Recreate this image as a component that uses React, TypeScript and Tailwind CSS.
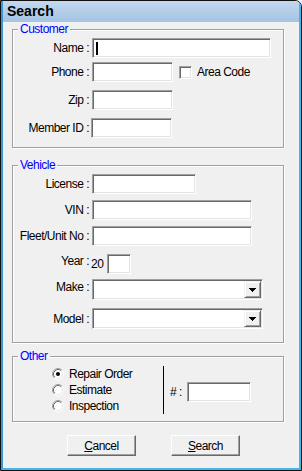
import type { ReactNode } from 'react'

const sunken =
  'bg-white border border-t-[#a0a0a0] border-l-[#a0a0a0] border-r-white border-b-white shadow-[inset_1px_1px_0_#696969,inset_-1px_-1px_0_#e3e3e3]'
const raised =
  'bg-[#f0f0f0] border border-t-white border-l-white border-r-[#696969] border-b-[#696969] shadow-[inset_-1px_-1px_0_#a0a0a0]'

function Field({ className, caret }: { className: string; caret?: boolean }) {
  return (
    <div className={`h-[20px] flex items-center pl-[2px] ${sunken} ${className}`}>
      {caret && <div className="w-[2px] h-[13px] ml-[1px] bg-black" />}
    </div>
  )
}

function Combo() {
  return (
    <div className={`w-[171px] h-[21px] flex justify-end p-[1px] ${sunken}`}>
      <div className="w-[17px] h-full flex items-center justify-center bg-[#f0f0f0] border border-t-[#f0f0f0] border-l-[#f0f0f0] border-r-[#696969] border-b-[#696969] shadow-[inset_1px_1px_0_white,inset_-1px_-1px_0_#a0a0a0]">
        <svg width="7" height="4" viewBox="0 0 7 4" shapeRendering="crispEdges">
          <rect x="0" y="0" width="7" height="1" fill="#000" />
          <rect x="1" y="1" width="5" height="1" fill="#000" />
          <rect x="2" y="2" width="3" height="1" fill="#000" />
          <rect x="3" y="3" width="1" height="1" fill="#000" />
        </svg>
      </div>
    </div>
  )
}

function Radio({ checked }: { checked?: boolean }) {
  return (
    <svg width="12" height="12" viewBox="0 0 12 12">
      <circle cx="6" cy="6" r="5" fill="#fff" />
      <path d="M2.11 9.89A5.5 5.5 0 0 1 9.89 2.11" fill="none" stroke="#a0a0a0" />
      <path d="M9.89 2.11A5.5 5.5 0 0 1 2.11 9.89" fill="none" stroke="#fff" />
      <path d="M2.82 9.18A4.5 4.5 0 0 1 9.18 2.82" fill="none" stroke="#696969" />
      <path d="M9.18 2.82A4.5 4.5 0 0 1 2.82 9.18" fill="none" stroke="#e3e3e3" />
      {checked && <circle cx="6" cy="6" r="2" fill="#000" />}
    </svg>
  )
}

function Group({ title, className, children }: { title: string; className: string; children: ReactNode }) {
  return (
    <div className={`relative ml-[9px] w-[272px] border border-[#a0a0a0] shadow-[inset_1px_1px_0_white,1px_1px_0_white] ${className}`}>
      <span className="absolute -top-[8px] left-[5px] px-[2px] bg-[#f0f0f0] text-[#0000ff] leading-[14px]">{title}</span>
      {children}
    </div>
  )
}

function Row({ label, className = '', labelClass = '', children }: { label: string; className?: string; labelClass?: string; children: ReactNode }) {
  return (
    <div className={`flex items-center ${className}`}>
      <span className={`w-[76px] text-right leading-[14px] whitespace-nowrap ${labelClass}`}>{label}</span>
      <div className="ml-[3px] flex items-center">{children}</div>
    </div>
  )
}

function PushButton({ mnemonic, rest }: { mnemonic: string; rest: string }) {
  return (
    <div className={`w-[69px] h-[21px] flex items-center justify-center ${raised}`}>
      <span className="leading-[14px]">
        <span className="underline">{mnemonic}</span>
        {rest}
      </span>
    </div>
  )
}

export default function App() {
  return (
    <div className="w-[302px] h-[471px] bg-[#f0f0f0] font-['Liberation_Sans',Arial,sans-serif] text-[12px] tracking-[-0.5px] text-black">
      <div className="h-full border border-[#111] rounded-tr-[7px] overflow-hidden">
        <div className="h-full flex flex-col border-l-2 border-r-2 border-b-2 border-l-[#3a98d8] border-r-[#43b6e8] border-b-[#43b6e8]">
          <div className="h-[21px] shrink-0 flex items-center pl-[4px] bg-gradient-to-b from-[#c3d9ef] to-[#a4c3e3] text-[14px] font-bold tracking-normal">
            Search
          </div>

          <Group title="Customer" className="mt-[7px] pt-[8px] pb-[9px]">
            <Row label="Name :">
              <Field className="w-[179px]" caret />
            </Row>
            <Row label="Phone :" className="mt-[4px]">
              <Field className="w-[81px]" />
              <div className={`ml-[6px] w-[13px] h-[13px] ${sunken}`} />
              <span className="ml-[5px] leading-[14px]">Area Code</span>
            </Row>
            <Row label="Zip :" className="mt-[8px]">
              <Field className="w-[81px]" />
            </Row>
            <Row label="Member ID :" className="mt-[8px]">
              <Field className="w-[81px] -ml-px" />
            </Row>
          </Group>

          <Group title="Vehicle" className="mt-[17px] pt-[8px] pb-[13px]">
            <Row label="License :">
              <Field className="w-[104px]" />
            </Row>
            <Row label="VIN :" className="mt-[6px]">
              <Field className="w-[160px]" />
            </Row>
            <Row label="Fleet/Unit No :" className="mt-[6px]">
              <Field className="w-[160px]" />
            </Row>
            <Row label="Year :" className="mt-[8px]" labelClass="pb-[6px]">
              <span className="-ml-px leading-[14px]">20</span>
              <Field className="w-[24px] ml-[4px]" />
            </Row>
            <Row label="Make :" className="mt-[5px]" labelClass="pb-[6px]">
              <Combo />
            </Row>
            <Row label="Model :" className="mt-[8px]">
              <Combo />
            </Row>
          </Group>

          <Group title="Other" className="mt-[13px] pt-[9px] pb-[7px]">
            <div className="flex h-[48px]">
              <div className="w-[150px] pl-[39px] flex flex-col">
                {['Repair Order', 'Estimate', 'Inspection'].map((label, i) => (
                  <div key={label} className="h-[16px] flex items-center">
                    <Radio checked={i === 0} />
                    <span className="ml-[5px] leading-[14px]">{label}</span>
                  </div>
                ))}
              </div>
              <div className="w-px bg-black" />
              <div className="flex items-center pl-[6px] pt-[4px]">
                <span className="w-[17px] leading-[14px]"># :</span>
                <Field className="w-[64px]" />
              </div>
            </div>
          </Group>

          <div className="mt-[13px] pl-[64px] flex gap-[35px]">
            <PushButton mnemonic="C" rest="ancel" />
            <PushButton mnemonic="S" rest="earch" />
          </div>
        </div>
      </div>
    </div>
  )
}
